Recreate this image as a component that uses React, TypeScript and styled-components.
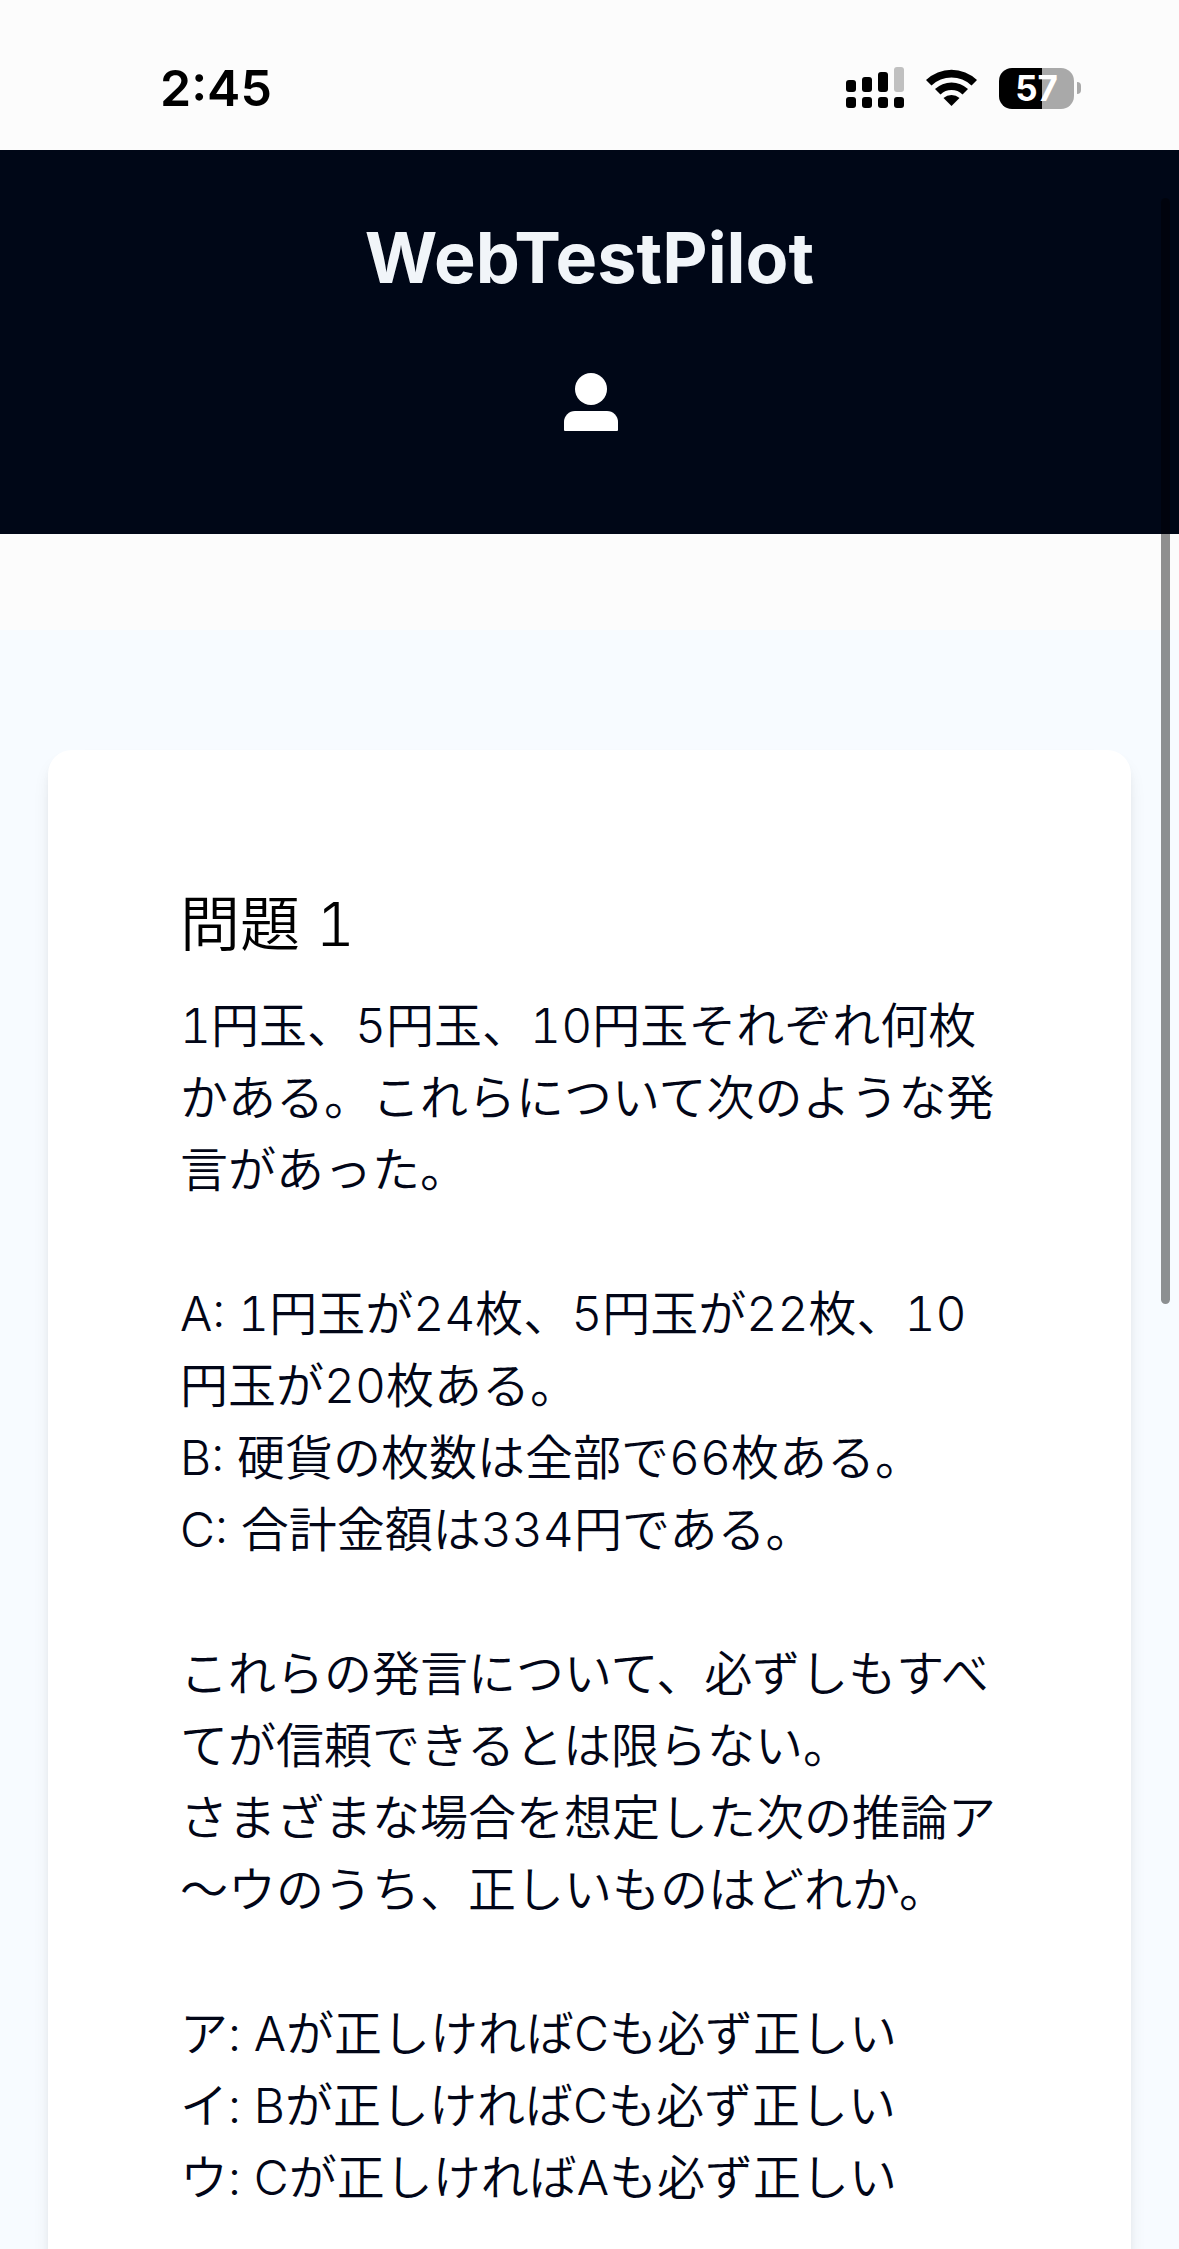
import React from 'react';
import styled, { createGlobalStyle } from 'styled-components';

const GlobalStyle = createGlobalStyle`
  *, *::before, *::after {
    box-sizing: border-box;
  }
  body {
    margin: 0;
    background: #fcfcfc;
    color: #020617;
    font-family: Inter, 'Noto Sans CJK JP', sans-serif;
  }
`;

const Screen = styled.div`
  position: relative;
  display: flex;
  flex-direction: column;
  height: 100vh;
  overflow: hidden;
`;

const StatusBar = styled.div`
  display: flex;
  flex: none;
  align-items: center;
  justify-content: space-between;
  height: 150px;
  padding: 26px 98px 0 160px;
  color: #000;
`;

const Clock = styled.time`
  font-size: 50px;
  font-weight: 600;
  line-height: 60px;
`;

const Indicators = styled.div`
  display: flex;
  align-items: center;
  gap: 22px;
`;

const Battery = styled.div`
  display: flex;
  align-items: center;
  gap: 3px;
`;

const BatteryBody = styled.div<{ $level: number }>`
  display: flex;
  align-items: center;
  justify-content: center;
  width: 75px;
  height: 41px;
  border-radius: 13px;
  background: linear-gradient(to right, #000 ${(p) => p.$level}%, #a9a9a9 ${(p) => p.$level}%);
  color: #fff;
  font-size: 35px;
  font-weight: 700;
  line-height: 40px;
`;

const BatteryTip = styled.span`
  width: 4px;
  height: 12px;
  border-radius: 0 4px 4px 0;
  background: #a9a9a9;
`;

const ScrollArea = styled.div`
  flex: 1;
  min-height: 0;
  overflow-y: auto;
  scrollbar-width: none;
`;

const Header = styled.header`
  display: flex;
  flex-direction: column;
  align-items: center;
  gap: 60px;
  margin-bottom: 96px;
  padding: 60px 48px 96px;
  background: #000717;
`;

const Brand = styled.h1`
  margin: 0;
  color: #f1f5f9;
  font-size: 70px;
  font-weight: 700;
  line-height: 96px;
`;

const IconButton = styled.button`
  display: flex;
  align-items: center;
  justify-content: center;
  width: 72px;
  height: 72px;
  padding: 0;
  border: 0;
  background: none;
  color: #fff;
`;

const Main = styled.main`
  padding: 120px 48px;
  background: #f7fbff;
`;

const Card = styled.article`
  padding: 132px;
  border-radius: 24px;
  background: #fff;
  box-shadow: 0 12px 18px -3px rgba(0, 0, 0, 0.1), 0 6px 12px -6px rgba(0, 0, 0, 0.1);
`;

const QuestionTitle = styled.h2`
  margin: 0 0 24px;
  color: #000;
  font-size: 60px;
  font-weight: 350;
  line-height: 84px;
  font-variant-numeric: tabular-nums;
`;

const QuestionText = styled.p`
  margin: 0;
  font-size: 48px;
  font-weight: 350;
  line-height: 72px;
  font-variant-numeric: tabular-nums;
  line-break: loose;
  white-space: pre-line;
`;

const ScrollThumb = styled.div`
  position: absolute;
  top: 198px;
  right: 9px;
  width: 9px;
  height: 1106px;
  border-radius: 5px;
  background: rgba(0, 0, 0, 0.43);
`;

const question = `1円玉、5円玉、10円玉それぞれ何枚かある。これらについて次のような発言があった。

A: 1円玉が24枚、5円玉が22枚、10円玉が20枚ある。
B: 硬貨の枚数は全部で66枚ある。
C: 合計金額は334円である。

これらの発言について、必ずしもすべてが信頼できるとは限らない。
さまざまな場合を想定した次の推論ア〜ウのうち、正しいものはどれか。

ア: Aが正しければCも必ず正しい
イ: Bが正しければCも必ず正しい
ウ: Cが正しければAも必ず正しい`;

const SignalIcon = () => (
  <svg width="58" height="42" viewBox="0 0 58 42" aria-hidden="true">
    <rect x="0" y="13" width="10" height="12" rx="3" />
    <rect x="16" y="10" width="10" height="15" rx="3" />
    <rect x="32" y="5" width="10" height="20" rx="3" />
    <rect x="48" y="0" width="10" height="25" rx="3" fill="#c0c0c0" />
    {[0, 16, 32, 48].map((x) => (
      <rect key={x} x={x} y="30" width="10" height="11" rx="3" />
    ))}
  </svg>
);

const WifiIcon = () => (
  <svg width="51" height="38" viewBox="0 0 51 38" aria-hidden="true">
    <path d="M0 11 A37 37 0 0 1 51 11 L45.500 16.500 A29 29 0 0 0 5.500 16.500 Z" />
    <path d="M9 20 A24 24 0 0 1 42 20 L36.500 25.500 A16 16 0 0 0 14.500 25.500 Z" />
    <path d="M17.500 29 A12 12 0 0 1 33.500 29 L25.500 37 Z" />
  </svg>
);

const UserIcon = () => (
  <svg width="56" height="58" viewBox="0 0 56 58" fill="currentColor" aria-hidden="true">
    <circle cx="29" cy="16" r="16" />
    <path d="M2 57 V49 A11 11 0 0 1 13 38 H45 A11 11 0 0 1 56 49 V57 Q56 58 55 58 H3 Q2 58 2 57 Z" />
  </svg>
);

export default function App() {
  return (
    <Screen lang="ja">
      <GlobalStyle />
      <StatusBar>
        <Clock>2:45</Clock>
        <Indicators>
          <SignalIcon />
          <WifiIcon />
          <Battery>
            <BatteryBody $level={57}>57</BatteryBody>
            <BatteryTip />
          </Battery>
        </Indicators>
      </StatusBar>
      <ScrollArea>
        <Header>
          <Brand>WebTestPilot</Brand>
          <IconButton type="button" aria-label="アカウント">
            <UserIcon />
          </IconButton>
        </Header>
        <Main>
          <Card>
            <QuestionTitle>問題 1</QuestionTitle>
            <QuestionText>{question}</QuestionText>
          </Card>
        </Main>
      </ScrollArea>
      <ScrollThumb />
    </Screen>
  );
}
